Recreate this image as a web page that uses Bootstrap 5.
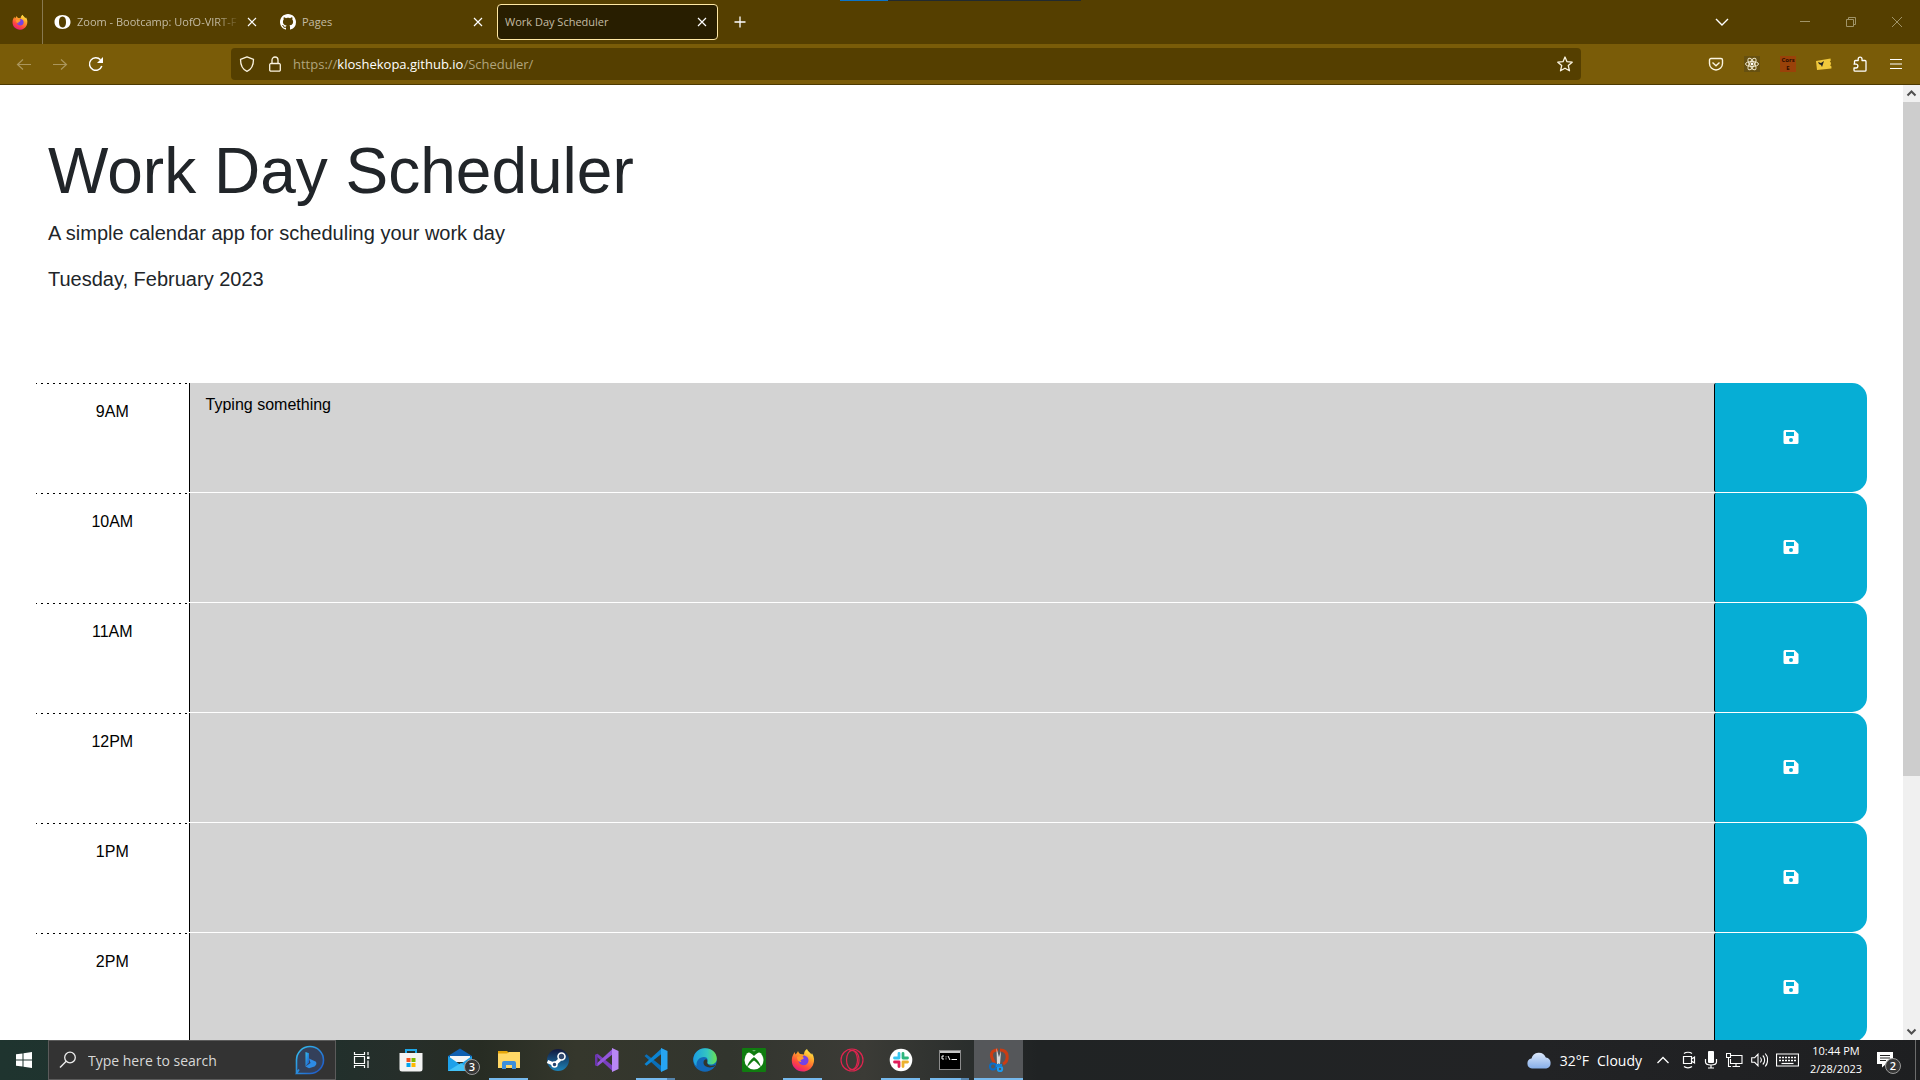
<!DOCTYPE html>
<html lang="en">
<head>
<meta charset="utf-8">
<meta name="viewport" content="width=device-width, initial-scale=1">
<title>Work Day Scheduler</title>
<link href="https://cdn.jsdelivr.net/npm/bootstrap@5.3.0/dist/css/bootstrap.min.css" rel="stylesheet">
<style>
  body { font-family: "Liberation Sans", Arial, sans-serif; height: 100vh; }
  svg { display: block; flex: none; }
  .sys-font { font-family: "Open Sans", "Noto Sans", sans-serif; }
  .plain { background: none; border: 0; padding: 0; color: inherit; display: flex; align-items: center; justify-content: center; flex: none; }

  /* tab strip */
  .tabstrip { height: 44px; background: #553f00; color: #fff; font-size: 11px; position: relative; }
  .screen-edge { position: absolute; top: 0; left: 840px; width: 241px; height: 1px; background: linear-gradient(to right, #0a74c9 48px, #212a30 48px); }
  .fx-cell { width: 43px; height: 44px; border-right: 1px solid #887950; padding-left: 12px; }
  .tab-item { width: 221px; height: 36px; padding: 0 9px 0 7px; margin: 0 2px; gap: 6px; color: #c4bca4; border-radius: 4px; }
  .tab-item a { color: inherit; text-decoration: none; flex: 1 1 0; min-width: 0; white-space: nowrap; }
  .tab-item.wide-left { padding-left: 9px; width: 222px; }
  .tab-item .fade-end { -webkit-mask-image: linear-gradient(to right, #000 85%, transparent); mask-image: linear-gradient(to right, #000 85%, transparent); }
  .tab-item.current { background: #281e00; border: 1px solid #ffe8a4; }
  .tab-item .plain { color: #fff; width: 12px; height: 20px; }
  .new-tab { margin-left: 14px; }
  .list-tabs { margin-right: 53px; }
  .win-btn { width: 46px; height: 44px; color: #a09468; }

  /* address bar */
  .toolbar { height: 41px; background: #7a5c08; border-bottom: 1px solid #4c3900; color: #fbf4e0; }
  .nav-keys { width: 231px; padding-left: 16px; gap: 20px; }
  .nav-keys .dim { color: #ab965c; }
  .urlbox { width: 1350px; height: 32px; background: #553f00; border-radius: 4px; padding: 0 8px; }
  .urlbox .lock { margin-left: 14px; margin-right: 12px; }
  .urlbox a { color: #b0a47c; font-size: 13px; text-decoration: none; padding-top: 2px; }
  .urlbox a b { color: #fff; font-weight: 400; }
  .ext-tools { gap: 20px; padding-right: 16px; }
  .cors { width: 16px; height: 16px; background: #9a4209; color: #2c0d00; font-size: 6px; line-height: 8px; font-weight: 700; }

  /* page */
  .viewport { flex: 1 1 0; min-height: 0; }
  .page-view { overflow: hidden; background: #fff; }
  .page-view h1 { font-size: 64px; font-weight: 400; line-height: 77px; }
  .page-view .lead { font-weight: 400; font-size: 20px; }
  .time-block { height: 110px; border-top: 1px solid #fff; color: #000; }
  .hour { padding-top: 17px; background: repeating-linear-gradient(to right, #000 0 1px, transparent 1px 5px, #000 5px 6px) 0 0 / 100% 1px no-repeat; }
  .slot { background: #d3d3d3; border: 0; border-left: 1px solid #000; resize: none; outline: 0; padding: 10px 16px; display: block; overflow: hidden; }
  .save-btn { background: #06aed5; border-left: 1px solid #000; border-radius: 2px 15px 15px 2px; color: #fff; padding-bottom: 2px; }
  .scroller { width: 17px; background: #f0f0f0; flex: none; color: #505050; }
  .scroller .knob { height: 674px; background: #cdcdcd; }

  /* taskbar */
  .taskbar { height: 40px; color: #fff; background: linear-gradient(to right, #1f342f 0, #20302c 16%, #262e2a 21%, #272c23 25%, #35372c 30%, #32352e 38%, #3b3b36 45%, #292d2c 51%, #202324 54%, #222325 80%, #1e1f21 100%); flex: none; }
  .start-btn { width: 48px; height: 40px; }
  .search-box { width: 288px; height: 40px; background: #333; border: 1px solid #5b5b5b; padding: 0 10px; gap: 11px; margin-right: 1px; }
  .search-box input { background: none; border: 0; outline: 0; color: #d8d8d8; font-size: 14px; flex: 1 1 0; min-width: 0; padding: 0; }
  .search-box input::placeholder { color: #d8d8d8; opacity: 1; }
  .task { width: 49px; height: 40px; position: relative; }
  .task.open::after { content: ""; position: absolute; left: 5px; right: 5px; bottom: 0; height: 2px; background: #76b9ed; }
  .task.multi::after { background: linear-gradient(to right, #76b9ed 31px, #5584ac 31px); }
  .task.front { background: #55575a; }
  .task.front::after { left: 0; right: 0; }
  .count { position: absolute; width: 16px; height: 16px; border-radius: 50%; border: 1px solid #9a9a9a; background: #363636; color: #fff; font-size: 11px; line-height: 14px; text-align: center; font-weight: 600; }
  .mail-count { left: 29px; top: 19px; }
  .note-count { left: 8px; top: 10px; }
  .weather { font-size: 14px; gap: 8px; }
  .tray { gap: 8px; margin-left: 14px; }
  .clock { width: 74px; font-size: 11px; line-height: 18px; text-align: center; white-space: nowrap; }
  .notes { width: 24px; height: 24px; position: relative; }
  .peek { width: 5px; height: 40px; border-left: 1px solid #6c6c6c; margin-left: 14px; }
</style>
</head>
<body class="d-flex flex-column overflow-hidden">

<svg width="0" height="0" class="position-absolute" aria-hidden="true">
  <defs>
    <linearGradient id="fxA" x1="0.8" y1="0" x2="0.25" y2="1"><stop offset="0" stop-color="#fff44f"/><stop offset=".35" stop-color="#ffa12a"/><stop offset=".7" stop-color="#ff4a3d"/><stop offset="1" stop-color="#e31587"/></linearGradient>
    <linearGradient id="edgeA" x1="0" y1="0" x2="1" y2="0"><stop offset="0" stop-color="#1b9de2"/><stop offset=".6" stop-color="#34c6c0"/><stop offset="1" stop-color="#6be34f"/></linearGradient>
    <linearGradient id="bingA" x1="0" y1="0" x2="1" y2="1"><stop offset="0" stop-color="#35c3f1"/><stop offset="1" stop-color="#1c4fc4"/></linearGradient>
    <linearGradient id="steamA" x1="0" y1="0" x2="0" y2="1"><stop offset="0" stop-color="#12173d"/><stop offset="1" stop-color="#1c83b8"/></linearGradient>
    <linearGradient id="cloudA" x1="0" y1="0" x2="0" y2="1"><stop offset="0" stop-color="#dce8fb"/><stop offset="1" stop-color="#86aee9"/></linearGradient>
    <symbol id="firefox" viewBox="0 0 24 24">
      <path fill="url(#fxA)" d="M16 1c.6 2 3 3.500 4.500 5.500l.4-1.500c2.500 4 3 8 1 12.200C20 21 16.500 23.500 12 23.500 5.500 23.500.8 18.800.8 12.500c0-3.500 1-6 3-8.500l.5 2.600C5.500 5.400 6.500 4.500 7 3c.5 1.200 1.200 2.400 2.300 3L13 6.500C13 4 14 2.300 16 1z"/>
      <path fill="#7542e5" d="M12.500 7.500c3 0 5.200 2.300 5 5.200-.2 2.700-2.300 4.500-5 4.500-2.800 0-5-2-5-4.600 0-1.200.5-2 1.200-2.600.8 1 2.300.8 3.800.4-.8-.8-1.500-1.500 0-2.900z"/>
      <path fill="#ff9a2e" d="M6 9c1.500-1.300 4-1 5 .2l2 .6c-.5 1.200-1.600 1.700-2.800 2-1 .4-.9 1.500.3 2.100-2.500.5-4.500-1.500-4.500-4.900z"/>
    </symbol>
    <symbol id="close" viewBox="0 0 12 12"><path d="M2 2l8 8M10 2l-8 8" stroke="currentColor" stroke-width="1.200" fill="none"/></symbol>
    <symbol id="save" viewBox="0 0 16 14"><path fill="currentColor" fill-rule="evenodd" d="M2 0h9.500L15.500 4v8.500A1.500 1.500 0 0 1 14 14H2A1.500 1.500 0 0 1 .5 12.500v-11A1.500 1.500 0 0 1 2 0zM3 2v4h8V2zM8 8a2 2 0 1 0 0 4 2 2 0 0 0 0-4z"/></symbol>
    <symbol id="vs" viewBox="0 0 24 24"><path fill="#7a3fc0" d="M0 7l2.500-1.300L18 18v5.500z"/><path fill="#9457dc" d="M0 17l2.500 1.300L18 6V.5z"/><path fill="#6a35ad" d="M0 7l2.500-1.300V18.300L0 17z"/><path fill="#b987f5" d="M17 0l6.500 3v18L17 24z"/></symbol>
    <symbol id="vscode" viewBox="0 0 24 24"><path fill="#0a6fb8" d="M.5 8L2.500 6.300 18 18.500V24z"/><path fill="#0b84d3" d="M.5 16l2 1.700L18 5.500V0z"/><path fill="#27a5f2" d="M17 0l6.500 3v18L17 24z"/></symbol>
  </defs>
</svg>

<!-- Tab strip -->
<div class="tabstrip sys-font d-flex align-items-center flex-shrink-0">
  <div class="screen-edge" aria-hidden="true"></div>
  <div class="fx-cell d-flex align-items-center"><svg width="16" height="16"><use href="#firefox"/></svg></div>
  <div class="tab-item wide-left d-flex align-items-center">
    <svg width="17" height="16" viewBox="0 0 17 16"><path fill="#fff" fill-rule="evenodd" d="M8.500 1C13.500 1 16.500 4 16.500 8s-3 7-8 7-8-3-8-7 3-7 8-7zm0 1.500C6 2.500 5 4.700 5 8s1 5.500 3.500 5.500S12 11.300 12 8s-1-5.500-3.500-5.500z"/></svg>
    <a href="#" class="fade-end">Zoom - Bootcamp: UofO-VIRT-F</a>
    <button class="plain" aria-label="Close tab"><svg width="12" height="12"><use href="#close"/></svg></button>
  </div>
  <div class="tab-item wide-left d-flex align-items-center">
    <svg width="16" height="16" viewBox="0 0 16 16"><path fill="#fff" d="M8 0C3.580 0 0 3.580 0 8c0 3.540 2.290 6.530 5.470 7.590.4.070.55-.17.55-.38 0-.19-.01-.82-.01-1.490-2.010.37-2.530-.49-2.690-.94-.09-.23-.48-.94-.82-1.130-.28-.15-.68-.52-.01-.53.63-.01 1.080.58 1.230.82.72 1.210 1.870.87 2.330.66.07-.52.28-.87.51-1.070-1.780-.2-3.640-.89-3.640-3.950 0-.87.31-1.590.82-2.150-.08-.2-.36-1.020.08-2.120 0 0 .67-.21 2.200.82.64-.18 1.320-.27 2-.27s1.360.09 2 .27c1.530-1.040 2.200-.82 2.200-.82.44 1.100.16 1.920.08 2.120.51.56.82 1.270.82 2.150 0 3.070-1.870 3.750-3.650 3.950.29.25.54.73.54 1.480 0 1.070-.01 1.930-.01 2.200 0 .21.15.46.55.38A8.010 8.010 0 0 0 16 8c0-4.420-3.580-8-8-8z"/></svg>
    <a href="#">Pages</a>
    <button class="plain" aria-label="Close tab"><svg width="12" height="12"><use href="#close"/></svg></button>
  </div>
  <div class="tab-item current d-flex align-items-center">
    <a href="#">Work Day Scheduler</a>
    <button class="plain" aria-label="Close tab"><svg width="12" height="12"><use href="#close"/></svg></button>
  </div>
  <button class="plain new-tab" aria-label="New tab"><svg width="12" height="12" viewBox="0 0 12 12"><path d="M6 .5v11M.5 6h11" stroke="#fff" stroke-width="1.300"/></svg></button>
  <div class="d-flex ms-auto align-items-center">
    <button class="plain list-tabs" aria-label="List tabs"><svg width="14" height="8" viewBox="0 0 14 8"><path d="M1 1l6 6 6-6" stroke="#fff" stroke-width="1.400" fill="none"/></svg></button>
    <button class="plain win-btn" aria-label="Minimize"><svg width="10" height="10" viewBox="0 0 10 10"><path d="M0 4.500h10" stroke="currentColor"/></svg></button>
    <button class="plain win-btn" aria-label="Restore"><svg width="10" height="10" viewBox="0 0 10 10"><path d="M.5 2.500h7v7h-7zM2.500 2V.5h7v7H8" stroke="currentColor" fill="none"/></svg></button>
    <button class="plain win-btn" aria-label="Close"><svg width="10" height="10" viewBox="0 0 10 10"><path d="M0 0l10 10M10 0L0 10" stroke="currentColor"/></svg></button>
  </div>
</div>

<!-- Address bar -->
<div class="toolbar sys-font d-flex align-items-center flex-shrink-0">
  <div class="nav-keys d-flex flex-shrink-0">
    <button class="plain dim" aria-label="Back"><svg width="16" height="16" viewBox="0 0 16 16"><path d="M15 8.500H2M7 3.500l-5.500 5 5.500 5" stroke="currentColor" stroke-width="1.200" fill="none"/></svg></button>
    <button class="plain dim" aria-label="Forward"><svg width="16" height="16" viewBox="0 0 16 16"><path d="M1 8.500h13M9 3.500l5.500 5-5.500 5" stroke="currentColor" stroke-width="1.200" fill="none"/></svg></button>
    <button class="plain" aria-label="Reload"><svg width="16" height="16" viewBox="0 0 16 16"><path d="M13.800 10A6.300 6.300 0 1 1 12.500 3.800" stroke="#fff" stroke-width="1.500" fill="none"/><path d="M15 1v6H9z" fill="#fff"/></svg></button>
  </div>
  <div class="urlbox d-flex align-items-center">
    <svg width="16" height="16" viewBox="0 0 16 16"><path d="M8 .8l6.500 2.500C14.500 9 12.500 13.500 8 15.300 3.500 13.500 1.500 9 1.500 3.300z" stroke="currentColor" stroke-width="1.300" stroke-linejoin="round" fill="none"/></svg>
    <svg class="lock" width="12" height="16" viewBox="0 0 12 16"><path d="M3 7V4a3 3 0 0 1 6 0v3M2 7.500h8a1.300 1.300 0 0 1 1.300 1.300v5A1.300 1.300 0 0 1 10 15.200H2A1.300 1.300 0 0 1 .7 13.800v-5A1.300 1.300 0 0 1 2 7.500z" stroke="currentColor" stroke-width="1.300" fill="none"/></svg>
    <a href="#">https://<b>kloshekopa.github.io</b>/Scheduler/</a>
    <button class="plain ms-auto" aria-label="Bookmark"><svg width="16" height="16" viewBox="0 0 16 16"><path d="M8 1l2 4.700 5.200.5-3.900 3.400 1.200 5.200L8 12.200l-4.500 2.600 1.200-5.200L.8 6.200 6 5.700z" stroke="currentColor" stroke-width="1.300" stroke-linejoin="round" fill="none"/></svg></button>
  </div>
  <div class="ext-tools d-flex align-items-center ms-auto">
    <button class="plain" aria-label="Pocket"><svg width="16" height="16" viewBox="0 0 16 16"><path d="M3 2.500h10A1.500 1.500 0 0 1 14.500 4v3.500a6.500 6.500 0 0 1-13 0V4A1.500 1.500 0 0 1 3 2.500zM4.500 6.500L8 9.700l3.500-3.200" stroke="currentColor" stroke-width="1.400" fill="none"/></svg></button>
    <button class="plain" aria-label="React developer tools"><svg width="16" height="16" viewBox="0 0 16 16"><rect width="16" height="16" fill="#665010"/><g fill="none" stroke="#eee6cc"><ellipse cx="8" cy="8" rx="6.500" ry="2.500"/><ellipse cx="8" cy="8" rx="6.500" ry="2.500" transform="rotate(60 8 8)"/><ellipse cx="8" cy="8" rx="6.500" ry="2.500" transform="rotate(120 8 8)"/></g><circle cx="8" cy="8" r="1.400" fill="#fff"/></svg></button>
    <button class="plain cors flex-column" aria-label="Cors E"><span>Cors</span><span>E</span></button>
    <button class="plain" aria-label="Coupons"><svg width="16" height="16" viewBox="0 0 16 16"><path fill="#f0c83c" d="M0 5l14.500-2.500.3 2-1 1 1 1 .2 1.500-.8 1.500 1.300 1-.1 2L1 14z"/><path fill="#222" d="M2 6l3 1 3-2-1 3-1 3-1-2-2-1z"/></svg></button>
    <button class="plain" aria-label="Extensions"><svg width="16" height="16" viewBox="0 0 16 16"><path d="M2.500 8V5.500a1 1 0 0 1 1-1h2.700V3a1.900 1.900 0 0 1 3.800 0v1.500h3a1 1 0 0 1 1 1v8.700a1 1 0 0 1-1 1H3a1 1 0 0 1-1-1V12h2a1.900 1.900 0 0 0 0-3.800H1.500" stroke="#fff" stroke-width="1.300" fill="none" stroke-linejoin="round"/></svg></button>
    <button class="plain" aria-label="Menu"><svg width="16" height="16" viewBox="0 0 16 16"><path d="M2 3.500h12M2 8h12M2 12.500h12" stroke="#fff" stroke-width="1.200"/></svg></button>
  </div>
</div>

<!-- Page -->
<div class="viewport d-flex">
  <div class="page-view flex-grow-1">
    <header class="p-5 mb-4">
      <h1>Work Day Scheduler</h1>
      <p class="lead">A simple calendar app for scheduling your work day</p>
      <p class="lead">Tuesday, February 2023</p>
    </header>
    <main class="container-fluid px-5" id="hours"></main>
  </div>
  <div class="scroller d-flex flex-column align-items-center">
    <button class="plain w-100" aria-label="Scroll up"><svg width="17" height="17" viewBox="0 0 17 17"><path d="M4.500 10.500l4-4 4 4" stroke="currentColor" stroke-width="2" fill="none"/></svg></button>
    <div class="knob w-100"></div>
    <button class="plain w-100 mt-auto" aria-label="Scroll down"><svg width="17" height="17" viewBox="0 0 17 17"><path d="M4.500 6.500l4 4 4-4" stroke="currentColor" stroke-width="2" fill="none"/></svg></button>
  </div>
</div>

<!-- Taskbar -->
<footer class="taskbar sys-font d-flex align-items-center">
  <button class="plain start-btn" aria-label="Start"><svg width="16" height="16" viewBox="0 0 16 16"><path fill="#fff" d="M0 2.300L6.500 1.400V7.500H0zM7.500 1.200L16 0v7.500H7.500zM0 8.500h6.500v6.100L0 13.700zM7.500 8.500H16V16l-8.500-1.200z"/></svg></button>
  <div class="search-box d-flex align-items-center">
    <svg width="18" height="18" viewBox="0 0 18 18"><circle cx="11" cy="6.500" r="5.300" fill="none" stroke="#eee" stroke-width="1.300"/><path d="M7.200 10.300L1 16.500" stroke="#eee" stroke-width="1.400"/></svg>
    <input type="text" placeholder="Type here to search" aria-label="Type here to search">
    <svg width="30" height="30" viewBox="0 0 30 30"><path d="M1.500 28V15A13.500 13.500 0 1 1 15 28.500H1.500l2.500-4" fill="#34405a" stroke="url(#bingA)" stroke-width="1.600"/><path fill="url(#bingA)" d="M10.500 7l3.500 1.300v9.200l-3.500 4z"/><path fill="#2d8be6" d="M10.500 21.500l5-3.500-1.500-4.500 7 3.200c1 2 0 3.800-1.500 4.700L14 23.200z"/></svg>
  </div>
  <button class="plain task" aria-label="Task view"><svg width="17" height="16" viewBox="0 0 17 16"><path d="M1.500 4.500h10v7h-10zM1.500 0v2.500h10V0M1.500 16v-2.500h10V16M15 0v3M15 8.500V16" stroke="#fff" stroke-width="1.200" fill="none"/><path d="M14 4.500h2.500V7H14z" fill="#fff"/></svg></button>
  <button class="plain task" aria-label="Store"><svg width="24" height="24" viewBox="0 0 24 24"><path d="M7 6V2h10v4" stroke="#1ea7e8" stroke-width="2" fill="none"/><path fill="#f3f3f3" d="M.5 5h23v16a2.500 2.500 0 0 1-2.500 2.500H3A2.500 2.500 0 0 1 .5 21z"/><path fill="#f25022" d="M7.500 10h4v4h-4z"/><path fill="#7fba00" d="M12.500 10h4v4h-4z"/><path fill="#00a4ef" d="M7.500 15h4v4h-4z"/><path fill="#ffb900" d="M12.500 15h4v4h-4z"/></svg></button>
  <button class="plain task" aria-label="Mail"><svg width="26" height="24" viewBox="0 0 26 24"><path fill="#0f5fb0" d="M1 8l12-7.500L25 8l-2 5H3z"/><path fill="#f5f5f5" d="M3 8h20v6H3z"/><path fill="#1da1ea" d="M1 8l12 8.500L25 8v15H1z"/><path fill="#43c3f7" d="M1 23L14 15l11 8z"/></svg><span class="count mail-count">3</span></button>
  <button class="plain task open" aria-label="File Explorer"><svg width="24" height="24" viewBox="0 0 24 24"><path fill="#e5a50a" d="M1 3h9l2 2v4H1z"/><path fill="#ffd766" d="M1 5.500h9L12 4h11v16H1z"/><path fill="#3c8fdc" d="M5 21v-6a2 2 0 0 1 2-2h10a2 2 0 0 1 2 2v6h-4v-4H9v4z"/></svg></button>
  <button class="plain task" aria-label="Steam"><svg width="24" height="24" viewBox="0 0 24 24"><circle cx="12" cy="12" r="11" fill="url(#steamA)"/><path d="M1.500 13.500l7 3 5.500-5" stroke="#fff" stroke-width="3.500" fill="none"/><circle cx="15.500" cy="8.500" r="3.500" fill="#33496e" stroke="#fff" stroke-width="1.600"/><circle cx="8.500" cy="16.500" r="2.500" fill="#23426d" stroke="#fff" stroke-width="1.500"/></svg></button>
  <button class="plain task" aria-label="Visual Studio"><svg width="24" height="24"><use href="#vs"/></svg></button>
  <button class="plain task open multi" aria-label="Visual Studio Code"><svg width="24" height="24"><use href="#vscode"/></svg></button>
  <button class="plain task" aria-label="Edge"><svg width="24" height="24" viewBox="0 0 24 24"><circle cx="12" cy="12" r="11.800" fill="#1268b8"/><path fill="url(#edgeA)" d="M.3 11C1 4.500 6 .2 12 .2c7 0 11.800 4.800 11.800 10.300 0 4-3 6-6 6-2.600 0-4-1-3.500-2.500.8-1.600.7-5-3.300-5-5 0-8 4-7.500 9C1.500 16.500.3 14 .3 11z"/><path fill="#32352e" d="M14.300 14c-.8 2.500 3 5 8 3l-.3 1c-5 3-12 1-11.500-4 .3-2 2.200-3 3.200-2.500.6.800.8 1.700.6 2.500z"/></svg></button>
  <button class="plain task" aria-label="Xbox"><svg width="24" height="24" viewBox="0 0 24 24"><rect width="24" height="24" rx="1" fill="#107c10"/><circle cx="12" cy="12" r="9.500" fill="#fff"/><path d="M5 4c3 0 5.500 2.500 7 4 1.500-1.500 4-4 7-4-2-1.500-4-2-7-.8C9 2 7 2.500 5 4zM5 20c.5-5 4-8.500 7-11 3 2.500 6.500 6 7 11-1.500-3-4.500-5.500-7-7.500-2.500 2-5.500 4.500-7 7.500z" fill="#107c10"/></svg></button>
  <button class="plain task open" aria-label="Firefox"><svg width="24" height="24"><use href="#firefox"/></svg></button>
  <button class="plain task" aria-label="Opera GX"><svg width="24" height="24" viewBox="0 0 24 24"><g fill="none" stroke="#e0244f" stroke-width="1.200"><circle cx="12" cy="12" r="11"/><ellipse cx="12" cy="12" rx="5.500" ry="9.500"/><path d="M9 3.500C14 0 19 5 19 12s-5 12-10 8.500"/></g></svg></button>
  <button class="plain task open" aria-label="Slack"><svg width="24" height="24" viewBox="0 0 24 24"><circle cx="12" cy="12" r="11.300" fill="#fff"/><g stroke-width="2.800" stroke-linecap="round"><path d="M10 5.500V10M5.500 10H10" stroke="#36c5f0"/><path d="M14 5.500V10M14 10h4.500" stroke="#2eb67d"/><path d="M14 14v4.500M14 14h4.500" stroke="#ecb22e"/><path d="M10 14v4.500M5.500 14H10" stroke="#e01e5a"/></g></svg></button>
  <button class="plain task open multi" aria-label="Command Prompt"><svg width="22" height="20" viewBox="0 0 22 20"><rect x=".5" y=".5" width="21" height="19" fill="#000" stroke="#8c8c8c"/><path fill="#c9c9c9" d="M1 1h20v2H1z"/><path d="M5 6H3v3h2M7 6.500v.8M7 8.500v.8M9 6l2 4M12.500 9.500H18" stroke="#fff" fill="none"/></svg></button>
  <button class="plain task open front" aria-label="Snip &amp; Sketch"><svg width="24" height="24" viewBox="0 0 24 24"><path d="M11 2C4 2 3 7 6 12l2 4M13 2c9 0 9 11 3 14" stroke="#cc3c12" stroke-width="3" fill="none"/><path d="M9.500 0L13 13l-3 4zM14 3l-1 13-3-1z" fill="#d8d8d8"/><circle cx="6" cy="18.500" r="3" fill="none" stroke="#0a6cc8" stroke-width="2"/><circle cx="13" cy="21" r="2.200" fill="none" stroke="#1b9bf0" stroke-width="2"/><path d="M9 16h6v3H9z" fill="#1683d8"/></svg></button>

  <div class="d-flex align-items-center ms-auto">
    <div class="weather d-flex align-items-center">
      <svg width="25" height="17" viewBox="0 0 25 17"><path fill="url(#cloudA)" d="M5 16.500a5 5 0 0 1-.5-9.900A7.500 7.500 0 0 1 18.800 5.500a5.600 5.600 0 0 1 .5 11z"/></svg>
      <span>32°F</span><span>Cloudy</span>
    </div>
    <div class="tray d-flex align-items-center">
      <button class="plain" aria-label="Show hidden icons"><svg width="14" height="8" viewBox="0 0 14 8"><path d="M1.500 7L7 1.500 12.500 7" stroke="#fff" stroke-width="1.300" fill="none"/></svg></button>
      <svg class="ms-1" width="14" height="18" viewBox="0 0 14 18"><path d="M1.500 5.500h8v7h-8zM9.500 8l3-2v6l-3-2M2 2.500C4 .8 8 .8 10 2.500M2 15.500c2 1.700 6 1.700 8 0" stroke="#fff" fill="none" stroke-width="1.200"/></svg>
      <svg width="14" height="18" viewBox="0 0 14 18"><rect x="4" y="0" width="6" height="12" rx="1" fill="#fff"/><path d="M1.500 8v3c0 2 1.500 3 5.500 3s5.500-1 5.500-3V8M7 14v3M4 17h6" stroke="#fff" fill="none" stroke-width="1.200"/></svg>
      <svg width="17" height="15" viewBox="0 0 17 15"><path d="M5 2.500h11v8H4.500V6M10 10.500v3M6.500 13.500H14M.5.500h4v4h-4zM2.500 4.500v9H5" stroke="#fff" fill="none" stroke-width="1.100"/></svg>
      <svg width="17" height="14" viewBox="0 0 17 14"><path d="M.7 4.700h3L7 1.200v11.600L3.700 9.300h-3zM9.300 4.500c1.300 1.500 1.300 3.500 0 5M11.800 2.500c2.500 2.500 2.500 6.500 0 9M14.200.5c3.200 3.500 3.200 9.500 0 13" stroke="#fff" fill="none" stroke-width="1.100"/></svg>
      <svg width="23" height="14" viewBox="0 0 23 14"><path d="M.5 1h22v12H.5z" stroke="#fff" fill="none" stroke-width="1.200"/><path d="M3 4.500h17M3 7.500h17" stroke="#fff" stroke-dasharray="2 1" stroke-width="1.400"/><path d="M5.500 10.500h12" stroke="#fff" stroke-width="1.200"/></svg>
    </div>
    <div class="clock">10:44 PM<br>2/28/2023</div>
    <button class="plain notes ms-1" aria-label="Notifications"><svg width="24" height="24" viewBox="0 0 24 24"><path fill="#fff" d="M0 4h16v12H9l-4 3.500V16H0z"/><path d="M3 7.500h10M3 10h10M3 12.500h6" stroke="#222"/></svg><span class="count note-count">2</span></button>
    <div class="peek"></div>
  </div>
</footer>

<script src="https://cdn.jsdelivr.net/npm/bootstrap@5.3.0/dist/js/bootstrap.bundle.min.js"></script>
<script>
  const entries = { '9AM': 'Typing something' };
  const labels = ['9AM', '10AM', '11AM', '12PM', '1PM', '2PM'];
  document.getElementById('hours').innerHTML = labels.map(h => `
    <div class="row time-block" id="hour-${h}">
      <label class="col-2 col-md-1 hour text-center" for="text-${h}">${h}</label>
      <textarea class="col-8 col-md-10 slot" id="text-${h}" spellcheck="false">${entries[h] || ''}</textarea>
      <button class="col-2 col-md-1 plain save-btn" aria-label="save ${h}"><svg width="16" height="14"><use href="#save"/></svg></button>
    </div>`).join('');
</script>
</body>
</html>
